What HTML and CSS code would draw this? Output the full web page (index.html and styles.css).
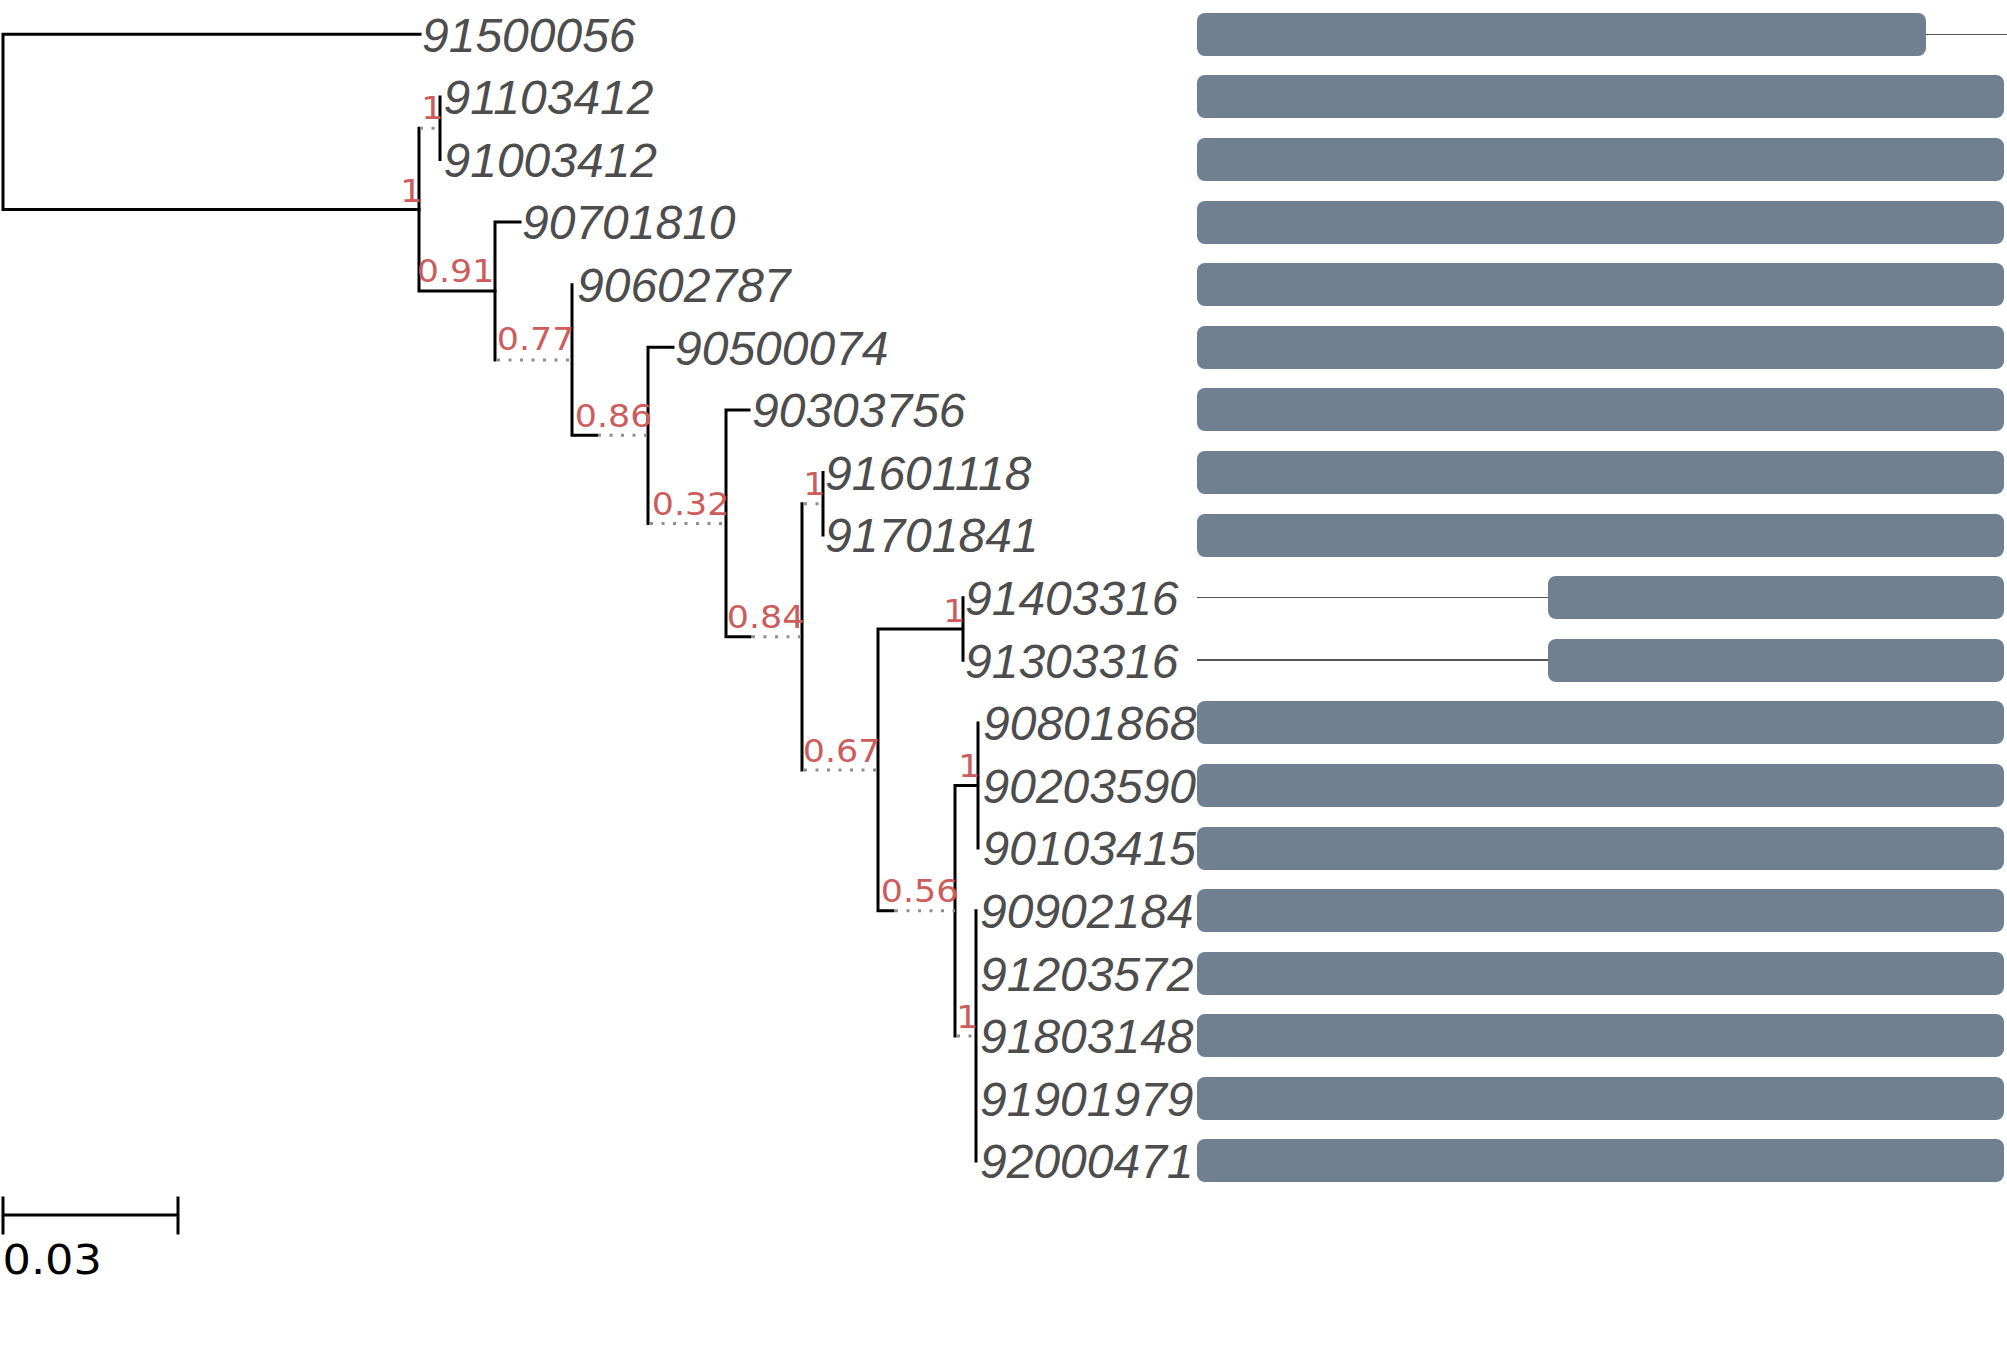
FILE: index.html
```html
<!DOCTYPE html>
<html>
<head>
<meta charset="utf-8">
<title>Phylogenetic tree</title>
<link rel="stylesheet" href="styles.css">
</head>
<body>
<div class="figure">
  <svg class="tree" width="1197" height="1372" viewBox="0 0 1197 1372" xmlns="http://www.w3.org/2000/svg">
    <g class="branches">
      <path class="br" d="M3 34.3 V209.6 M3 34.3 H420 M3 209.6 H419"/>
      <path class="br" d="M419 128.2 V291.1 M440 96.9 V159.5 M419 291.1 H495"/>
      <path class="br" d="M495 222.1 V360 M495 222.1 H520"/>
      <path class="br" d="M572 284.7 V435.3 M572 435.3 H597"/>
      <path class="br" d="M648 347.3 V523.4 M648 347.3 H673"/>
      <path class="br" d="M726 409.9 V636.8 M726 409.9 H749 M726 636.8 H750"/>
      <path class="br" d="M802 503.8 V769.9 M823 472.5 V535.1"/>
      <path class="br" d="M878 629 V910.7 M878 629 H963 M963 597.7 V660.3 M878 910.7 H893"/>
      <path class="br" d="M955 785.5 V1035.9 M955 785.5 H978 M978 722.9 V848.1 M976 910.7 V1161.1"/>
    </g>
    <g class="dots">
      <path class="dot" d="M420 128.2 H440"/>
      <path class="dot" d="M497 360 H572"/>
      <path class="dot" d="M598 435.3 H648"/>
      <path class="dot" d="M650 523.4 H726"/>
      <path class="dot" d="M752 636.8 H802"/>
      <path class="dot" d="M804 503.8 H823"/>
      <path class="dot" d="M804 769.9 H878"/>
      <path class="dot" d="M895 910.7 H955"/>
      <path class="dot" d="M957 1035.9 H976"/>
    </g>
    <g class="tips">
      <text class="tip" x="422" y="51.6">91500056</text>
      <text class="tip" x="443.5" y="114.2">91103412</text>
      <text class="tip" x="443.5" y="176.8">91003412</text>
      <text class="tip" x="522" y="239.4">90701810</text>
      <text class="tip" x="577" y="302">90602787</text>
      <text class="tip" x="675" y="364.6">90500074</text>
      <text class="tip" x="752" y="427.2">90303756</text>
      <text class="tip" x="825" y="489.8">91601118</text>
      <text class="tip" x="825" y="552.4">91701841</text>
      <text class="tip" x="965" y="615">91403316</text>
      <text class="tip" x="965" y="677.6">91303316</text>
      <text class="tip" x="983" y="740.2">90801868</text>
      <text class="tip" x="982.5" y="802.8">90203590</text>
      <text class="tip" x="982.5" y="865.4">90103415</text>
      <text class="tip" x="980" y="928">90902184</text>
      <text class="tip" x="980" y="990.6">91203572</text>
      <text class="tip" x="980" y="1053.2">91803148</text>
      <text class="tip" x="980" y="1115.8">91901979</text>
      <text class="tip" x="980" y="1178.4">92000471</text>
    </g>
    <g class="supports">
      <text class="sup" x="422.5" y="202">1</text>
      <text class="sup" x="443.5" y="119">1</text>
      <text class="sup" x="494.5" y="282">0.91</text>
      <text class="sup" x="574.5" y="350">0.77</text>
      <text class="sup" x="652.5" y="427">0.86</text>
      <text class="sup" x="729.5" y="515">0.32</text>
      <text class="sup" x="804.5" y="628">0.84</text>
      <text class="sup" x="825.5" y="495">1</text>
      <text class="sup" x="880.5" y="762">0.67</text>
      <text class="sup" x="965.5" y="622">1</text>
      <text class="sup" x="958.5" y="902">0.56</text>
      <text class="sup" x="980.5" y="777">1</text>
      <text class="sup" x="978.5" y="1028">1</text>
    </g>
    <g class="scalebar">
      <path class="br" d="M3 1215 H178 M3 1198 V1233 M178 1198 V1233"/>
      <text class="scale-label" x="2.5" y="1274">0.03</text>
    </g>
  </svg>
  <div class="tracks">
    <div class="track"><div class="bar" style="width:729px"></div><div class="stem"></div></div>
    <div class="track"><div class="bar" style="width:807px"></div></div>
    <div class="track"><div class="bar" style="width:807px"></div></div>
    <div class="track"><div class="bar" style="width:807px"></div></div>
    <div class="track"><div class="bar" style="width:807px"></div></div>
    <div class="track"><div class="bar" style="width:807px"></div></div>
    <div class="track"><div class="bar" style="width:807px"></div></div>
    <div class="track"><div class="bar" style="width:807px"></div></div>
    <div class="track"><div class="bar" style="width:807px"></div></div>
    <div class="track"><div class="stem"></div><div class="bar end" style="width:456px"></div></div>
    <div class="track"><div class="stem"></div><div class="bar end" style="width:456px"></div></div>
    <div class="track"><div class="bar" style="width:807px"></div></div>
    <div class="track"><div class="bar" style="width:807px"></div></div>
    <div class="track"><div class="bar" style="width:807px"></div></div>
    <div class="track"><div class="bar" style="width:807px"></div></div>
    <div class="track"><div class="bar" style="width:807px"></div></div>
    <div class="track"><div class="bar" style="width:807px"></div></div>
    <div class="track"><div class="bar" style="width:807px"></div></div>
    <div class="track"><div class="bar" style="width:807px"></div></div>
  </div>
</div>
</body>
</html>
```
FILE: styles.css
```css
html, body {
  margin: 0;
  padding: 0;
  background: #ffffff;
}

.figure {
  display: flex;
  width: 2007px;
  height: 1372px;
  overflow: hidden;
}

.tree {
  flex: 0 0 1197px;
  display: block;
}

.br {
  fill: none;
  stroke: #000000;
  stroke-width: 3;
  stroke-linecap: square;
}

.dot {
  fill: none;
  stroke: #8e8e8e;
  stroke-width: 3;
  stroke-dasharray: 3 8.5;
}

.tip {
  font-family: "Liberation Sans", Arial, sans-serif;
  font-style: italic;
  font-size: 48px;
  fill: #4d4d4d;
}

.sup {
  font-family: "DejaVu Sans", sans-serif;
  font-size: 32px;
  fill: #cd5c5c;
  text-anchor: end;
  transform-box: fill-box;
  transform-origin: 100% 100%;
  transform: scaleX(1.09);
}

.scale-label {
  font-family: "DejaVu Sans", sans-serif;
  font-size: 41px;
  fill: #000000;
  transform-box: fill-box;
  transform-origin: 0 100%;
  transform: scaleX(1.09);
}

.tracks {
  flex: 0 0 810px;
  display: flex;
  flex-direction: column;
  gap: 19.6px;
  padding-top: 12.8px;
}

.track {
  height: 43px;
  display: flex;
  align-items: center;
}

.bar {
  flex: none;
  height: 43px;
  background: #708090;
  border-radius: 8px;
}

.bar.end {
  margin-right: 3px;
}

.stem {
  flex: 1;
  height: 1.5px;
  background: #555555;
}
```
